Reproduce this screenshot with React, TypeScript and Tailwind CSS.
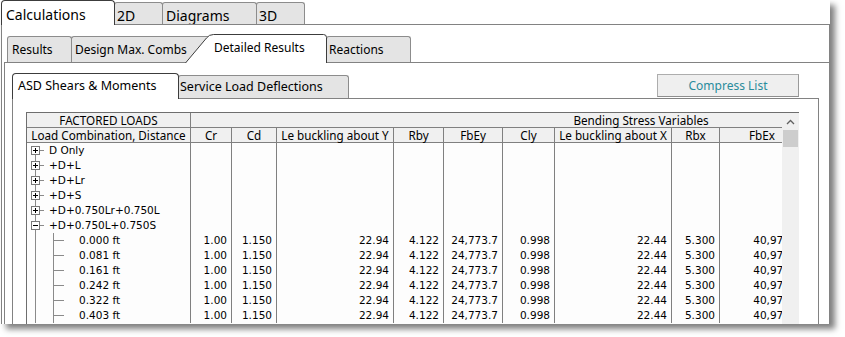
import React from 'react'

const colW = [
  'w-[164px]',
  'w-[41px]',
  'w-[45px]',
  'w-[117px]',
  'w-[50px]',
  'w-[59px]',
  'w-[52px]',
  'w-[117px]',
  'w-[48px]',
  'w-[85px]',
]

const headers = [
  'Load Combination, Distance',
  'Cr',
  'Cd',
  'Le buckling about Y',
  'Rby',
  'FbEy',
  'Cly',
  'Le buckling about X',
  'Rbx',
  'FbEx',
]

const combos = ['D Only', '+D+L', '+D+Lr', '+D+S', '+D+0.750Lr+0.750L', '+D+0.750L+0.750S']
const distances = ['0.000', '0.081', '0.161', '0.242', '0.322', '0.403']
const values = ['1.00', '1.150', '22.94', '4.122', '24,773.7', '0.998', '22.44', '5.300', '40,973.4']
const blanks = ['', '', '', '', '', '', '', '', '']

function RootGlyph({ open, first }: { open: boolean; first: boolean }) {
  return (
    <svg width="22" height="15" className="shrink-0">
      <line x1="8.5" y1={first ? 7 : 0} x2="8.5" y2="15" stroke="#8a8a8a" />
      <line x1="13" y1="7.5" x2="17" y2="7.5" stroke="#8a8a8a" />
      <rect x="4.5" y="3.5" width="8" height="8" fill="#fff" stroke="#7a7a7a" />
      <line x1="6" y1="7.5" x2="11" y2="7.5" stroke="#000" />
      {!open && <line x1="8.5" y1="5" x2="8.5" y2="10" stroke="#000" />}
    </svg>
  )
}

function ChildGlyph() {
  return (
    <svg width="52" height="15" className="shrink-0">
      <line x1="8.5" y1="0" x2="8.5" y2="15" stroke="#8a8a8a" />
      <line x1="26.5" y1="0" x2="26.5" y2="15" stroke="#8a8a8a" />
      <line x1="27" y1="7.5" x2="37" y2="7.5" stroke="#8a8a8a" />
    </svg>
  )
}

function Cells({ data }: { data: string[] }) {
  return (
    <>
      {data.map((v, i) => (
        <div key={i} className={`${colW[i + 1]} shrink-0 border-r border-[#808080] pr-[4px] text-right`}>
          {v}
        </div>
      ))}
    </>
  )
}

export default function App() {
  return (
    <div className="h-[337px] w-[845px] overflow-hidden bg-white font-['Noto_Sans',sans-serif] text-black">
      <div className="ml-px flex h-[324px] w-[829px] flex-col bg-white shadow-[5px_5px_6px_rgba(0,0,0,0.5)]">
        {/* main tabs */}
        <div className="flex h-[24px] shrink-0 items-end text-[14px] leading-[20px]">
          <div className="relative z-10 -mb-px h-[25px] w-[114px] rounded-t-[4px] border border-b-0 border-[#3c3c3c] bg-white pl-[4px] pt-[4px]">
            Calculations
          </div>
          <div className="-ml-px h-[22px] w-[49px] rounded-t-[3px] border border-b-0 border-[#8c8c8c] bg-[#e4e4e4] pl-[2px] pt-[3px]">
            2D
          </div>
          <div className="-ml-px h-[22px] w-[95px] rounded-t-[3px] border border-b-0 border-[#8c8c8c] bg-[#e4e4e4] pl-[3px] pt-[3px]">
            Diagrams
          </div>
          <div className="-ml-px h-[22px] w-[49px] rounded-t-[3px] border border-b-0 border-[#8c8c8c] bg-[#e4e4e4] pl-[2px] pt-[3px]">
            3D
          </div>
        </div>

        <div className="flex min-h-0 flex-1 flex-col border-x border-t border-[#828282]">
          {/* result tabs */}
          <div className="flex h-[37px] shrink-0 items-end pl-[5px] text-[12px] leading-[16px]">
            <div className="h-[26px] w-[65px] rounded-t-[3px] border border-b-0 border-[#8c8c8c] bg-[#e4e4e4] pl-[4px] pt-[5px]">
              Results
            </div>
            <div className="-ml-px h-[26px] w-[137px] rounded-tl-[3px] border-l border-t border-[#8c8c8c] bg-[#e4e4e4] pl-[3px] pt-[5px]">
              Design Max. Combs
            </div>
            <div className="relative z-10 -mb-px -ml-[23px] h-[29px] w-[142px] pl-[29px] pt-[6px]">
              <svg width="142" height="29" className="absolute left-0 top-0">
                <path
                  d="M0.5 29 L21.5 4 Q24 0.5 28.5 0.5 L138.5 0.5 Q141.5 0.5 141.5 3.5 L141.5 29 Z"
                  fill="#fff"
                  stroke="none"
                />
                <path
                  d="M0.5 29 L21.5 4 Q24 0.5 28.5 0.5 L138.5 0.5 Q141.5 0.5 141.5 3.5 L141.5 29"
                  fill="none"
                  stroke="#3c3c3c"
                />
              </svg>
              <span className="relative">Detailed Results</span>
            </div>
            <div className="-ml-px h-[26px] w-[85px] rounded-t-[3px] border border-b-0 border-[#8c8c8c] bg-[#e4e4e4] pl-[2px] pt-[5px]">
              Reactions
            </div>
          </div>

          <div className="ml-[2px] flex min-h-0 flex-1 flex-col border-l border-t border-[#828282]">
            <div className="ml-[7px] mr-[10px] flex min-h-0 flex-1 flex-col">
              {/* detail tabs */}
              <div className="flex h-[35px] shrink-0 items-end text-[12.5px] leading-[16px]">
                <div className="relative z-10 -mb-px h-[26px] w-[167px] rounded-t-[4px] border border-b-0 border-[#3c3c3c] bg-white pl-[5px] pt-[4px]">
                  ASD Shears &amp; Moments
                </div>
                <div className="-ml-px h-[23px] w-[171px] rounded-t-[3px] border border-b-0 border-[#8c8c8c] bg-[#e4e4e4] pl-[1px] pt-[3px]">
                  Service Load Deflections
                </div>
                <button className="ml-auto mr-[20px] mt-[11px] flex h-[23px] w-[142px] items-center justify-center self-start border border-[#adadad] border-b-[#8e8e8e] border-r-[#9a9a9a] bg-[#efefef] text-[12px] text-[#2a8c9c]">
                  Compress List
                </button>
              </div>

              <div className="min-h-0 flex-1 overflow-hidden border-x border-t border-[#828282] pl-[13px] pt-[13px]">
                <div className="flex h-full w-[773px] border-l border-t border-[#6e6e6e]">
                  <div className="w-[755px] shrink-0 overflow-hidden bg-[#fdfdfd]">
                    <div className="w-[1100px]">
                      <div className="flex h-[15px] border-b border-[#808080] bg-[#f0f0f0] text-[11.7px] leading-[14px]">
                        <div className="w-[164px] shrink-0 border-r border-[#808080] text-center">FACTORED LOADS</div>
                        <div className="w-[900px] shrink-0 text-center">Bending Stress Variables</div>
                      </div>
                      <div className="flex h-[15px] border-b border-[#808080] bg-[#f0f0f0] text-[11.7px] leading-[14px]">
                        {headers.map((h, i) => (
                          <div key={h} className={`${colW[i]} shrink-0 border-r border-[#808080] text-center whitespace-nowrap`}>
                            {h}
                          </div>
                        ))}
                      </div>

                      <div className="font-['DejaVu_Sans',sans-serif] text-[10.5px] leading-[15px]">
                        {combos.map((c, i) => (
                          <div key={c} className="flex h-[15px]">
                            <div className="flex w-[164px] shrink-0 border-r border-[#808080]">
                              <RootGlyph open={i === combos.length - 1} first={i === 0} />
                              <span className="whitespace-nowrap">{c}</span>
                            </div>
                            <Cells data={blanks} />
                          </div>
                        ))}
                        {distances.map(d => (
                          <div key={d} className="flex h-[15px]">
                            <div className="flex w-[164px] shrink-0 border-r border-[#808080]">
                              <ChildGlyph />
                              <span className="whitespace-nowrap">{d} ft</span>
                            </div>
                            <Cells data={values} />
                          </div>
                        ))}
                      </div>
                    </div>
                  </div>

                  {/* vertical scrollbar */}
                  <div className="w-[17px] shrink-0 bg-[#f0f0f0]">
                    <div className="h-[17px]">
                      <svg width="17" height="17">
                        <polyline points="5,11 8.5,7.5 12,11" fill="none" stroke="#606060" strokeWidth="1.3" />
                      </svg>
                    </div>
                    <div className="ml-px h-[17px] w-[15px] bg-[#cdcdcd]" />
                  </div>
                </div>
              </div>
            </div>
          </div>
        </div>
      </div>
    </div>
  )
}
